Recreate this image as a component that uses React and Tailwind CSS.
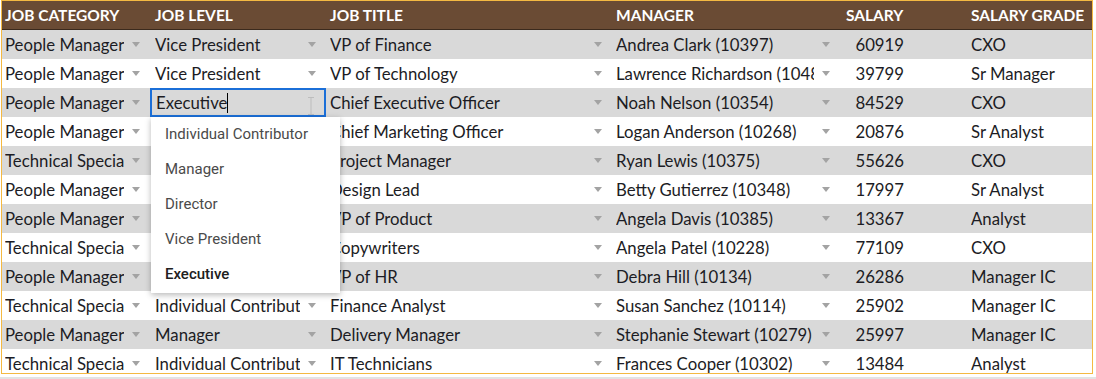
const cols = [
  { key: "cat", label: "JOB CATEGORY", w: "w-[148px]", pl: "pl-[3px]", arrow: true },
  { key: "level", label: "JOB LEVEL", w: "w-[176px]", pl: "pl-[5px]", arrow: true },
  { key: "title", label: "JOB TITLE", w: "w-[286px]", pl: "pl-[4px]", arrow: true },
  { key: "manager", label: "MANAGER", w: "w-[228px]", pl: "pl-[4px]", arrow: true },
  { key: "salary", label: "SALARY", w: "w-[125px]", pl: "pl-[6px]", arrow: false },
  { key: "grade", label: "SALARY GRADE", w: "w-[127px]", pl: "pl-[6px]", arrow: false },
];

const rows = [
  ["People Manager", "Vice President", "VP of Finance", "Andrea Clark (10397)", "60919", "CXO"],
  ["People Manager", "Vice President", "VP of Technology", "Lawrence Richardson (10480)", "39799", "Sr Manager"],
  ["People Manager", "Executive", "Chief Executive Officer", "Noah Nelson (10354)", "84529", "CXO"],
  ["People Manager", "Director", "Chief Marketing Officer", "Logan Anderson (10268)", "20876", "Sr Analyst"],
  ["Technical Specialist", "Manager", "Project Manager", "Ryan Lewis (10375)", "55626", "CXO"],
  ["People Manager", "Manager", "Design Lead", "Betty Gutierrez (10348)", "17997", "Sr Analyst"],
  ["People Manager", "Vice President", "VP of Product", "Angela Davis (10385)", "13367", "Analyst"],
  ["Technical Specialist", "Individual Contributor", "Copywriters", "Angela Patel (10228)", "77109", "CXO"],
  ["People Manager", "Vice President", "VP of HR", "Debra Hill (10134)", "26286", "Manager IC"],
  ["Technical Specialist", "Individual Contributor", "Finance Analyst", "Susan Sanchez (10114)", "25902", "Manager IC"],
  ["People Manager", "Manager", "Delivery Manager", "Stephanie Stewart (10279)", "25997", "Manager IC"],
  ["Technical Specialist", "Individual Contributor", "IT Technicians", "Frances Cooper (10302)", "13484", "Analyst"],
];

const options = ["Individual Contributor", "Manager", "Director", "Vice President", "Executive"];

function Arrow() {
  return (
    <div className="w-[26px] shrink-0 flex justify-center pr-[2px]">
      <div className="w-0 h-0 border-l-[4.5px] border-r-[4.5px] border-t-[5px] border-l-transparent border-r-transparent border-t-[#a3a3a3]" />
    </div>
  );
}

function Cell({ col, value, editing }) {
  if (col.key === "salary") {
    return (
      <div className={`${col.w} shrink-0 flex items-center justify-end pr-[61px]`}>
        {value}
      </div>
    );
  }
  if (editing) {
    return (
      <div className={`${col.w} shrink-0 relative flex items-center border-2 border-[#1b6fd8] pl-[4px]`}>
        <span>{value}</span>
        <span className="w-px h-[20px] bg-black" />
        <svg className="absolute right-[9px] top-[7px]" width="8" height="18" viewBox="0 0 8 18">
          <path d="M1 0.5h6M4 0.5v17M1 17.5h6" stroke="#bdbdbd" strokeWidth="1" fill="none" />
        </svg>
      </div>
    );
  }
  return (
    <div className={`${col.w} shrink-0 flex items-center ${col.pl}`}>
      <div className="flex-1 min-w-0 overflow-hidden whitespace-nowrap">{value}</div>
      {col.arrow && <Arrow />}
    </div>
  );
}

export default function App() {
  return (
    <div className="w-[1096px] h-[379px] bg-white flex flex-col overflow-hidden relative" style={{ fontFamily: "Lato, 'Liberation Sans', sans-serif" }}>
      <div className="ml-[1px] w-[1092px] h-[374px] border border-[#f4b942] overflow-hidden">
        <div className="flex h-[29px] pt-[1px] bg-[#6a4b34] border-b border-[#3b2a1d] text-white font-bold text-[15.5px] items-center">
          {cols.map((c) => (
            <div key={c.key} className={`${c.w} shrink-0 ${c.pl} whitespace-nowrap`}>{c.label}</div>
          ))}
        </div>
        {rows.map((r, i) => (
          <div key={i} className={`flex h-[29px] text-[16.75px] text-[#1c1c24] ${i % 2 === 0 ? "bg-[#d9d9d9]" : "bg-white"}`}>
            {cols.map((c, j) => (
              <Cell key={c.key} col={c} value={r[j]} editing={i === 2 && j === 1} />
            ))}
          </div>
        ))}
      </div>
      <div className="mt-auto h-[2px] bg-[#e3e3e3]" />

      <div className="absolute left-[151px] top-[117px] w-[189px] bg-white shadow-[0_2px_6px_rgba(0,0,0,0.28)] pb-[1px]" style={{ fontFamily: "Roboto, sans-serif" }}>
        {options.map((o) => (
          <div key={o} className={`h-[35px] flex items-center pl-[14px] text-[15px] ${o === "Executive" ? "text-[#202020] font-medium" : "text-[#4a4a4a]"}`}>
            {o}
          </div>
        ))}
      </div>
    </div>
  );
}
